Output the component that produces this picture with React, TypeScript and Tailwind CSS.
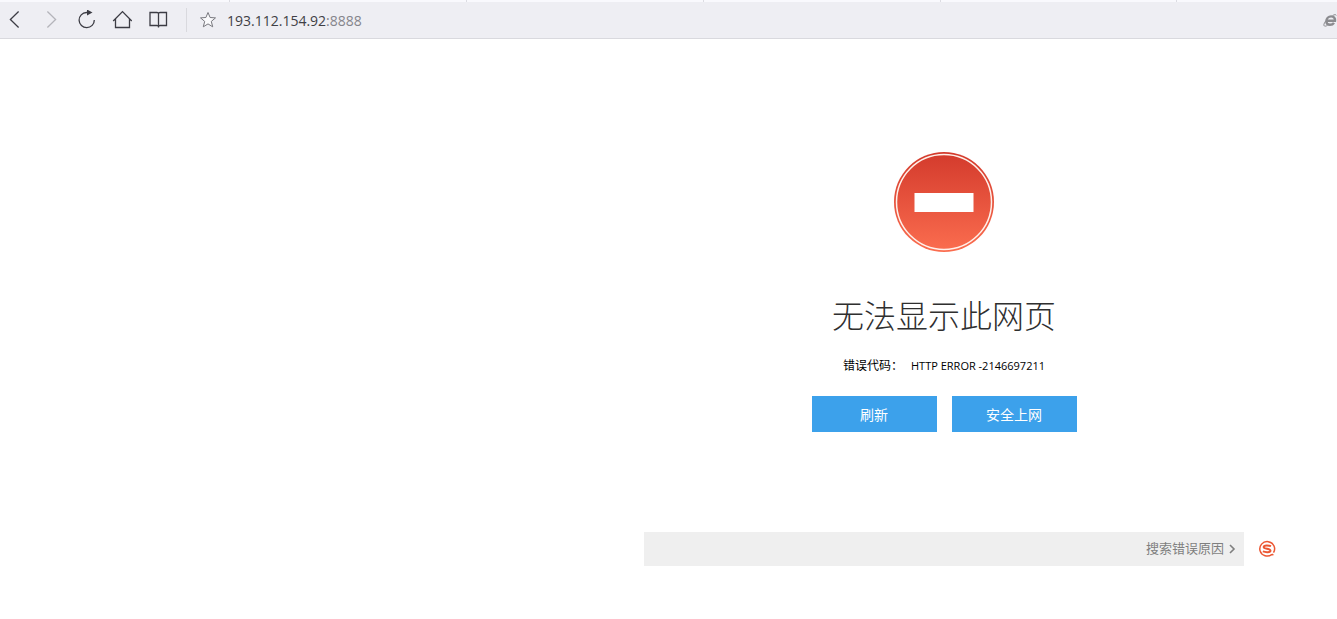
import type { ReactNode } from 'react';

const TABS = [230, 237, 237, 237, 236];

type ToolButtonProps = {
  label: string;
  disabled?: boolean;
  children: ReactNode;
};

function ToolButton({ label, disabled, children }: ToolButtonProps) {
  return (
    <button
      type="button"
      aria-label={label}
      disabled={disabled}
      className="flex size-5 items-center justify-center text-[#3c3c44] disabled:text-[#b4b4ba]"
    >
      <svg
        viewBox="0 0 20 20"
        className="size-5"
        fill="none"
        stroke="currentColor"
        strokeWidth="1.3"
      >
        {children}
      </svg>
    </button>
  );
}

function Toolbar() {
  return (
    <header className="font-['Open_Sans',sans-serif]">
      <div className="flex h-0.5 overflow-hidden bg-[#f9f9fd]">
        {TABS.map((width, i) => (
          <div
            key={i}
            className="shrink-0 border-r border-[#dcdce2]"
            style={{ width }}
          />
        ))}
      </div>
      <div className="flex h-[37px] items-center border-b border-[#d9d9de] bg-[#eeeef3] pl-1">
        <nav className="flex gap-4">
          <ToolButton label="后退">
            <path d="M14.6 1.5 6.4 9.5l8.2 8" />
          </ToolButton>
          <ToolButton label="前进" disabled>
            <path d="m7.4 1.5 8.2 8-8.2 8" />
          </ToolButton>
          <ToolButton label="刷新">
            <path d="M13 2.5H10.5A7.6 7.6 0 1 0 18.300 10" />
            <path d="M11 -.5v6l5.500-3Z" fill="currentColor" stroke="none" />
          </ToolButton>
          <ToolButton label="主页">
            <path d="M1.2 11 10.5 1.6l9.3 9.4M3.500 9v8.500h14V9" />
          </ToolButton>
          <ToolButton label="收藏夹">
            <path d="M2 2.500h7q1.500 0 1.500 1 0-1 1.500-1h6.500v13H12q-1.500 0-1.500 1 0-1-1.500-1H2ZM10.500 3.500v14" />
          </ToolButton>
        </nav>
        <div className="ml-[18px] h-6 w-px bg-[#d9d9de]" />
        <button
          type="button"
          aria-label="收藏"
          className="ml-[11px] flex size-5 items-center justify-center text-[#77777d]"
        >
          <svg viewBox="0 0 20 20" className="size-5" stroke="currentColor">
            <path
              d="m10 2.500 2.100 5 5.400.4-4.200 3.500 1.400 5.400L10 13.900l-4.700 2.900 1.400-5.400L2.500 7.900l5.400-.4Z"
              fill="#fafafc"
            />
          </svg>
        </button>
        <p className="ml-[9px] grow pt-0.5 text-sm text-[#3f3f45]">
          193.112.154.92<span className="text-[#85858c]">:8888</span>
        </p>
        <svg
          viewBox="0 0 14 14"
          className="h-3.5 w-3.5 shrink-0 text-[#8b8b8f]"
          fill="none"
          stroke="currentColor"
        >
          <path
            d="M3.4 7.8H12C12.5 5 10.6 3.4 8.2 3.4 5.4 3.4 3.4 5.6 3.3 8.2c0 2.300 1.500 3.600 3.700 3.600 1.900 0 3.200-.8 4-2"
            strokeWidth="2.4"
          />
          <path d="M2.600 8.100C.8 10.600.4 12.400 1.400 13c.7.400 1.900 0 3-.6M9.500 2.600C11.500 1.400 13 1.400 13.300 2.400" />
        </svg>
      </div>
    </header>
  );
}

function NoEntryIcon() {
  return (
    <svg viewBox="0 0 100 100" className="size-[100px]" aria-hidden="true">
      <defs>
        <linearGradient id="stop" x1="0" y1="0" x2="0" y2="1">
          <stop offset="0" stopColor="#d33a2c" />
          <stop offset="1" stopColor="#fb6d4f" />
        </linearGradient>
      </defs>
      <circle cx="50" cy="50" r="50" fill="url(#stop)" />
      <circle
        cx="50"
        cy="50"
        r="47.5"
        fill="none"
        stroke="#fff0ea"
        strokeWidth="1.5"
      />
      <path d="M20.500 41h59v19h-59z" fill="#fff" />
    </svg>
  );
}

function SearchBar() {
  return (
    <div className="ml-8 flex w-[632px] items-center justify-between">
      <form className="flex h-[34px] w-[600px] bg-[#efefef]">
        <input
          type="text"
          aria-label="搜索错误原因"
          className="min-w-0 grow bg-transparent px-3 text-sm outline-none"
        />
        <button
          type="button"
          className="flex shrink-0 items-center gap-1 pr-2 text-[13px] text-[#7f7f7f]"
        >
          搜索错误原因
          <svg
            viewBox="0 0 8 10"
            className="h-2.5 w-2"
            fill="none"
            stroke="currentColor"
            strokeWidth="1.6"
          >
            <path d="m2 1 4 4-4 4" />
          </svg>
        </button>
      </form>
      <svg
        viewBox="0 0 18 18"
        className="size-[18px]"
        fill="none"
        stroke="#ec5733"
      >
        <path
          d="M14 14.300A7.400 7.200 0 1 1 15.500 12.600M13.800 14.200l1.600.9"
          strokeWidth="1.5"
        />
        <path
          d="M13 6.200C11 5.300 5.700 4.900 5.700 6.900c0 2.200 6.800 1.600 6.800 3.800 0 1.900-5 1.700-7.700.7"
          strokeWidth="2"
        />
      </svg>
    </div>
  );
}

export default function App() {
  return (
    <div className="min-h-screen overflow-x-hidden bg-white font-['Open_Sans','Noto_Sans_CJK_SC',sans-serif]">
      <Toolbar />
      <main className="flex flex-col items-center pt-[113px] pl-[551px]">
        <NoEntryIcon />
        <h1 className="mt-10 text-[32px] leading-12 font-light text-[#2f2f2f]">
          无法显示此网页
        </h1>
        <p className="mt-4 flex gap-2 text-black">
          <span className="text-xs leading-5">错误代码：</span>
          <span className="text-[11px] leading-5">HTTP ERROR -2146697211</span>
        </p>
        <div className="mt-5 flex gap-[15px]">
          <button
            type="button"
            className="h-9 w-[125px] bg-[#3ca1eb] pt-0.5 text-sm text-white"
          >
            刷新
          </button>
          <button
            type="button"
            className="h-9 w-[125px] bg-[#3ca1eb] pt-0.5 text-sm text-white"
          >
            安全上网
          </button>
        </div>
        <div className="mt-[100px]">
          <SearchBar />
        </div>
      </main>
    </div>
  );
}
